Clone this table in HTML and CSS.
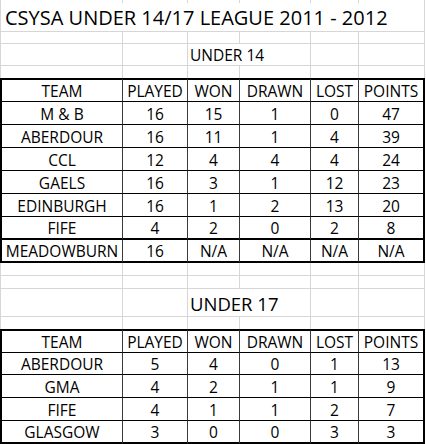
FILE: index.html
```html
<!DOCTYPE html>
<html>
<head>
<meta charset="utf-8">
<link rel="stylesheet" href="styles.css">
</head>
<body>
<div class="sheet">
  <div class="row h3 open"><div class="c"></div><div class="c"></div><div class="c"></div><div class="c"></div><div class="c"></div><div class="c"></div></div>
  <div class="row h29"><div class="c span6 title">CSYSA UNDER 14/17 LEAGUE 2011 - 2012</div></div>
  <div class="row h12"><div class="c"></div><div class="c"></div><div class="c"></div><div class="c"></div><div class="c"></div><div class="c"></div></div>
  <div class="row h22"><div class="c"></div><div class="c"></div><div class="c span2 sub">UNDER 14</div><div class="c"></div><div class="c"></div></div>
  <div class="row h12 open"><div class="c"></div><div class="c"></div><div class="c"></div><div class="c"></div><div class="c"></div><div class="c"></div></div>

  <div class="row h24 t head"><div class="c">TEAM</div><div class="c">PLAYED</div><div class="c">WON</div><div class="c">DRAWN</div><div class="c">LOST</div><div class="c">POINTS</div></div>
  <div class="row h23 t"><div class="c">M &amp; B</div><div class="c">16</div><div class="c">15</div><div class="c">1</div><div class="c">0</div><div class="c">47</div></div>
  <div class="row h23 t"><div class="c">ABERDOUR</div><div class="c">16</div><div class="c">11</div><div class="c">1</div><div class="c">4</div><div class="c">39</div></div>
  <div class="row h23 t"><div class="c">CCL</div><div class="c">12</div><div class="c">4</div><div class="c">4</div><div class="c">4</div><div class="c">24</div></div>
  <div class="row h23 t"><div class="c">GAELS</div><div class="c">16</div><div class="c">3</div><div class="c">1</div><div class="c">12</div><div class="c">23</div></div>
  <div class="row h23 t"><div class="c">EDINBURGH</div><div class="c">16</div><div class="c">1</div><div class="c">2</div><div class="c">13</div><div class="c">20</div></div>
  <div class="row h23 t end"><div class="c">FIFE</div><div class="c">4</div><div class="c">2</div><div class="c">0</div><div class="c">2</div><div class="c">8</div></div>
  <div class="row h23 t end"><div class="c">MEADOWBURN</div><div class="c">16</div><div class="c">N/A</div><div class="c">N/A</div><div class="c">N/A</div><div class="c">N/A</div></div>

  <div class="row h13"><div class="c"></div><div class="c"></div><div class="c"></div><div class="c"></div><div class="c"></div><div class="c"></div></div>
  <div class="row h13"><div class="c"></div><div class="c"></div><div class="c"></div><div class="c"></div><div class="c"></div><div class="c"></div></div>
  <div class="row h28"><div class="c"></div><div class="c"></div><div class="c span2 sub big">UNDER 17</div><div class="c"></div><div class="c"></div></div>
  <div class="row h12 open"><div class="c"></div><div class="c"></div><div class="c"></div><div class="c"></div><div class="c"></div><div class="c"></div></div>

  <div class="row h24 t head"><div class="c">TEAM</div><div class="c">PLAYED</div><div class="c">WON</div><div class="c">DRAWN</div><div class="c">LOST</div><div class="c">POINTS</div></div>
  <div class="row h22 t"><div class="c">ABERDOUR</div><div class="c">5</div><div class="c">4</div><div class="c">0</div><div class="c">1</div><div class="c">13</div></div>
  <div class="row h23 t"><div class="c">GMA</div><div class="c">4</div><div class="c">2</div><div class="c">1</div><div class="c">1</div><div class="c">9</div></div>
  <div class="row h23 t"><div class="c">FIFE</div><div class="c">4</div><div class="c">1</div><div class="c">1</div><div class="c">2</div><div class="c">7</div></div>
  <div class="row h23 t end"><div class="c">GLASGOW</div><div class="c">3</div><div class="c">0</div><div class="c">0</div><div class="c">3</div><div class="c">3</div></div>
</div>
</body>
</html>
```
FILE: styles.css
```css
html, body {
  margin: 0;
  padding: 0;
  background: #ffffff;
}
body {
  width: 426px;
  height: 444px;
  overflow: hidden;
  font-family: "Open Sans", "Noto Sans", sans-serif;
  color: #000;
}
.sheet {
  display: flex;
  flex-direction: column;
  width: 425px;
}
.row {
  display: grid;
  grid-template-columns: 123px 65px 52px 71px 48px 66px;
}
.h3 { height: 3px; }
.h12 { height: 12px; }
.h13 { height: 13px; }
.h22 { height: 22px; }
.h23 { height: 23px; }
.h24 { height: 24px; }
.h28 { height: 28px; }
.h29 { height: 29px; }

.c {
  box-sizing: border-box;
  border-right: 1px solid #d6d6d6;
  border-bottom: 1px solid #d6d6d6;
  display: flex;
  align-items: flex-end;
  min-width: 0;
  white-space: nowrap;
  font-size: 15.5px;
  line-height: 1;
}
.row > .c:first-child {
  border-left: 1px solid #d6d6d6;
}
.open > .c {
  border-bottom: none;
}
.span6 { grid-column: span 6; }
.span2 { grid-column: span 2; }

.title {
  font-size: 20px;
  padding: 0 0 3px 4px;
}
.sub {
  padding: 0 0 2px 2px;
}
.sub.big {
  font-size: 18.5px;
  padding-bottom: 3px;
}

/* bordered league tables */
.t > .c {
  justify-content: center;
  padding-bottom: 2px;
  border-bottom: 1px solid #000;
  border-right: 1px solid #3a3a3a;
}
.row.t > .c:first-child {
  border-left: 2px solid #000;
}
.row.t > .c:last-child {
  border-right: 2px solid #000;
}
.head > .c {
  border-top: 2px solid #000;
}
.t.end > .c {
  border-bottom: 2px solid #000;
}
```
